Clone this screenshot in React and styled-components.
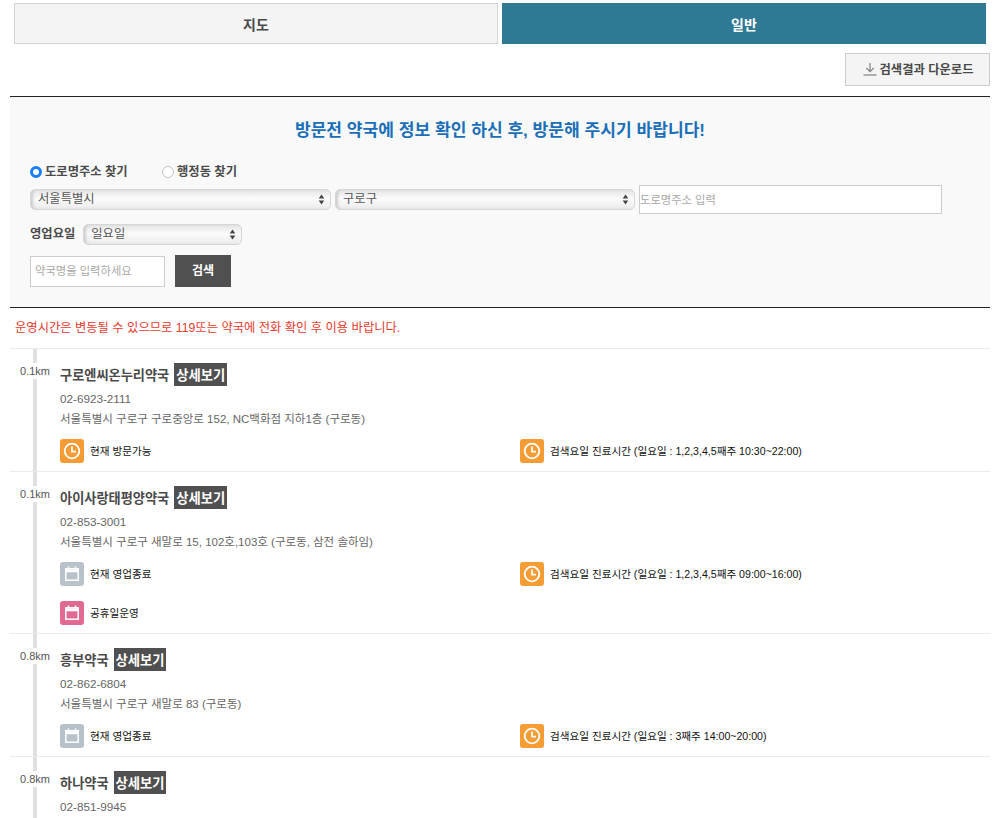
import React from 'react';
import styled, { createGlobalStyle } from 'styled-components';

const GlobalStyle = createGlobalStyle`
    html, body {
        margin: 0;
        padding: 0;
        background: #fff;
        height: 818px;
        overflow: hidden;
    }
    body, input, select, button {
        font-family: "Liberation Sans", "Noto Sans CJK KR", sans-serif;
    }
`

const Page = styled.div`
    width: 1002px;
    height: 818px;
    overflow: hidden;
    box-sizing: border-box;
    padding: 3px 12px 0 10px;
`

const Tabs = styled.div`
    display: flex;
    gap: 4px;
    padding: 0 4px;
`

const Tab = styled.div`
    width: 484px;
    height: 41px;
    box-sizing: border-box;
    display: flex;
    align-items: center;
    justify-content: center;
    font-size: 14px;
    font-weight: bold;
    color: ${({active}) => active ? '#fff' : '#4a4a4a'};
    background-color: ${({active}) => active ? '#2e7a94' : '#f4f4f4'};
    border: ${({active}) => active ? 'none' : '1px solid #d4d4d4'};
`

const DownloadRow = styled.div`
    display: flex;
    justify-content: flex-end;
    margin-top: 9px;
`

const DownloadButton = styled.button`
    width: 145px;
    height: 33px;
    box-sizing: border-box;
    display: flex;
    align-items: center;
    justify-content: center;
    gap: 2px;
    padding: 0 0 2px;
    font-size: 12.3px;
    font-weight: bold;
    color: #4a4a4a;
    background-color: #f4f4f4;
    border: 1px solid #ccc;
`

const SearchBox = styled.div`
    margin-top: 10px;
    height: 210px;
    padding: 0 20px;
    background-color: #f9f9f9;
    border-top: 1px solid #222;
    border-bottom: 1px solid #222;
`

const Title = styled.h2`
    margin: 0;
    padding-top: 23px;
    height: 28px;
    line-height: 22px;
    text-align: center;
    font-size: 17.1px;
    font-weight: bold;
    color: #1a6fb8;
`

const RadioRow = styled.div`
    display: flex;
    margin-top: 13px;
    height: 20px;
    align-items: center;
`

const RadioLabel = styled.label`
    display: flex;
    align-items: center;
    gap: 3px;
    width: 132px;
    font-size: 12.3px;
    font-weight: bold;
    color: #4a4a4a;
`

const RadioDot = styled.span`
    width: 12px;
    height: 12px;
    margin-top: 2px;
    box-sizing: border-box;
    border-radius: 50%;
    background-color: #fff;
    border: ${({checked}) => checked ? '3.5px solid #1a7ffb' : '1px solid #c4c4c4'};
`

const AddressRow = styled.div`
    display: flex;
    align-items: center;
    gap: 4px;
    height: 29px;
    margin-top: 4px;
`

const SelectWrap = styled.div`
    position: relative;
    width: ${({w}) => w}px;
    height: 21px;
    flex-shrink: 0;
`

const Select = styled.select`
    appearance: none;
    width: 100%;
    height: 100%;
    box-sizing: border-box;
    padding: 0 0 1px 7px;
    font-size: 12.3px;
    color: #555;
    border: 1px solid #d6d6d6;
    border-radius: 5px;
    background: linear-gradient(#e4e4e4, #fbfbfb 45%, #ececec);
    box-shadow: inset 3px 0 3px -1px #ccc;
    outline: none;
`

const SelectArrow = styled.svg`
    position: absolute;
    right: 6px;
    top: 5px;
    pointer-events: none;
`

const TextInput = styled.input`
    box-sizing: border-box;
    width: ${({w}) => w}px;
    height: ${({h}) => h}px;
    padding: 0 ${({pad}) => pad}px;
    font-size: 11.3px;
    background-color: #fff;
    border: 1px solid #ccc;
    outline: none;
    &::placeholder {
        color: #a8a8a8;
    }
`

const DayRow = styled.div`
    display: flex;
    align-items: center;
    gap: 8px;
    margin-top: 10px;
    height: 21px;
`

const DayLabel = styled.span`
    font-size: 12.3px;
    font-weight: bold;
    color: #4a4a4a;
    padding-bottom: 3px;
`

const NameRow = styled.div`
    display: flex;
    align-items: center;
    gap: 10px;
    margin-top: 10px;
    height: 32px;
`

const SearchButton = styled.button`
    width: 56px;
    height: 32px;
    padding: 0 0 3px;
    font-size: 12px;
    font-weight: bold;
    color: #fff;
    background-color: #505050;
    border: none;
`

const Notice = styled.p`
    margin: 0;
    height: 40px;
    padding-left: 5px;
    line-height: 41px;
    font-size: 12.3px;
    color: #e8392c;
`

const Item = styled.div`
    border-top: 1px solid #ebebeb;
    padding: 14px 0 8px;
    display: grid;
    grid-template-columns: 50px 1fr;
    background: linear-gradient(#e0e0e0, #e0e0e0) 23px 0 / 4px 100% no-repeat;
`

const Distance = styled.div`
    justify-self: end;
    align-self: start;
    width: 30px;
    height: 16px;
    margin: 0 10px 0 0;
    line-height: 16px;
    text-align: right;
    white-space: nowrap;
    font-size: 11px;
    color: #555;
    background-color: #fff;
`

const NameLine = styled.div`
    display: flex;
    align-items: center;
    gap: 5px;
    height: 23px;
`

const Name = styled.strong`
    font-size: 13.2px;
    color: #4a4a4a;
`

const DetailTag = styled.span`
    height: 23px;
    padding: 0 2px;
    display: inline-flex;
    align-items: center;
    font-size: 13.3px;
    font-weight: bold;
    color: #fff;
    background-color: #505050;
`

const Phone = styled.div`
    margin-top: 3px;
    height: 20px;
    line-height: 20px;
    font-size: 11.7px;
    color: #666;
`

const Address = styled.div`
    height: 20px;
    line-height: 20px;
    font-size: 11.5px;
    color: #666;
`

const StatusGrid = styled.div`
    display: grid;
    grid-template-columns: 460px 1fr;
    row-gap: 15px;
    margin-top: 10px;
`

const Status = styled.div`
    display: flex;
    align-items: center;
    gap: 6px;
    height: 24px;
    padding-bottom: 1px;
    box-sizing: border-box;
    font-size: 10.6px;
    color: #111;
    white-space: nowrap;
`

const IconBox = styled.span`
    width: 24px;
    height: 24px;
    flex-shrink: 0;
    display: flex;
    align-items: center;
    justify-content: center;
    border-radius: 3px;
    background-color: ${({color}) => color};
`

const ClockIcon = () => (
    <IconBox color="#f59d34">
        <svg width="18" height="18" viewBox="0 0 18 18" fill="none" stroke="#fff">
            <circle cx="9" cy="9" r="7.3" strokeWidth="1.8"/>
            <path d="M9 4.6V9.6H13" strokeWidth="1.7"/>
        </svg>
    </IconBox>
)

const CalendarIcon = ({color}) => (
    <IconBox color={color}>
        <svg width="18" height="18" viewBox="0 0 18 18" fill="none" stroke="#fff">
            <rect x="2.8" y="3.8" width="12.4" height="11.4" strokeWidth="1.5"/>
            <path d="M2.8 5.8H15.2" strokeWidth="3"/>
            <path d="M5.5 1.5V4M12.5 1.5V4" strokeWidth="1.4"/>
        </svg>
    </IconBox>
)

const Arrows = () => (
    <SelectArrow width="7" height="11" viewBox="0 0 7 11" fill="#444">
        <path d="M3.5 0.5L6.3 4.5H0.7Z"/>
        <path d="M3.5 10.5L0.7 6.5H6.3Z"/>
    </SelectArrow>
)

const DownloadIcon = () => (
    <svg width="16" height="16" viewBox="0 0 16 16" fill="none" stroke="#888" strokeWidth="1.3">
        <path d="M8 2V10.5M4.3 7L8 10.7L11.7 7"/>
        <path d="M1.5 14H14.5"/>
    </svg>
)

// the last row runs off the bottom of the page, only its phone line is on screen
const pharmacies = [
    {
        name: '구로엔씨온누리약국', dist: '0.1km', phone: '02-6923-2111',
        addr: '서울특별시 구로구 구로중앙로 152, NC백화점 지하1층 (구로동)',
        open: true, hours: '검색요일 진료시간 (일요일 : 1,2,3,4,5째주 10:30~22:00)',
    },
    {
        name: '아이사랑태평양약국', dist: '0.1km', phone: '02-853-3001',
        addr: '서울특별시 구로구 새말로 15, 102호,103호 (구로동, 삼전 솔하임)',
        open: false, holiday: true, hours: '검색요일 진료시간 (일요일 : 1,2,3,4,5째주 09:00~16:00)',
    },
    {
        name: '흥부약국', dist: '0.8km', phone: '02-862-6804',
        addr: '서울특별시 구로구 새말로 83 (구로동)',
        open: false, hours: '검색요일 진료시간 (일요일 : 3째주 14:00~20:00)',
    },
    { name: '하나약국', dist: '0.8km', phone: '02-851-9945' },
]

const App = () => {
    return (
        <Page>
            <GlobalStyle />
            <Tabs>
                <Tab>지도</Tab>
                <Tab active>일반</Tab>
            </Tabs>
            <DownloadRow>
                <DownloadButton><DownloadIcon />검색결과 다운로드</DownloadButton>
            </DownloadRow>
            <SearchBox>
                <Title>방문전 약국에 정보 확인 하신 후, 방문해 주시기 바랍니다!</Title>
                <RadioRow>
                    <RadioLabel><RadioDot checked />도로명주소 찾기</RadioLabel>
                    <RadioLabel><RadioDot />행정동 찾기</RadioLabel>
                </RadioRow>
                <AddressRow>
                    <SelectWrap w={301}>
                        <Select defaultValue="서울특별시"><option>서울특별시</option></Select>
                        <Arrows />
                    </SelectWrap>
                    <SelectWrap w={300}>
                        <Select defaultValue="구로구"><option>구로구</option></Select>
                        <Arrows />
                    </SelectWrap>
                    <TextInput w={303} h={29} pad={0} placeholder="도로명주소 입력" />
                </AddressRow>
                <DayRow>
                    <DayLabel>영업요일</DayLabel>
                    <SelectWrap w={159}>
                        <Select defaultValue="일요일"><option>일요일</option></Select>
                        <Arrows />
                    </SelectWrap>
                </DayRow>
                <NameRow>
                    <TextInput w={135} h={31} pad={4} placeholder="약국명을 입력하세요" />
                    <SearchButton>검색</SearchButton>
                </NameRow>
            </SearchBox>
            <Notice>운영시간은 변동될 수 있으므로 119또는 약국에 전화 확인 후 이용 바랍니다.</Notice>
            {pharmacies.map((p) => (
                <Item key={p.name}>
                    <Distance>{p.dist}</Distance>
                    <div>
                        <NameLine>
                            <Name>{p.name}</Name>
                            <DetailTag>상세보기</DetailTag>
                        </NameLine>
                        <Phone>{p.phone}</Phone>
                        {p.addr && (
                            <>
                                <Address>{p.addr}</Address>
                                <StatusGrid>
                                    <Status>
                                        {p.open ? <ClockIcon /> : <CalendarIcon color="#b9c2cb" />}
                                        {p.open ? '현재 방문가능' : '현재 영업종료'}
                                    </Status>
                                    <Status><ClockIcon />{p.hours}</Status>
                                    {p.holiday && <Status><CalendarIcon color="#e06a92" />공휴일운영</Status>}
                                </StatusGrid>
                            </>
                        )}
                    </div>
                </Item>
            ))}
        </Page>
    )
}

export default App;
